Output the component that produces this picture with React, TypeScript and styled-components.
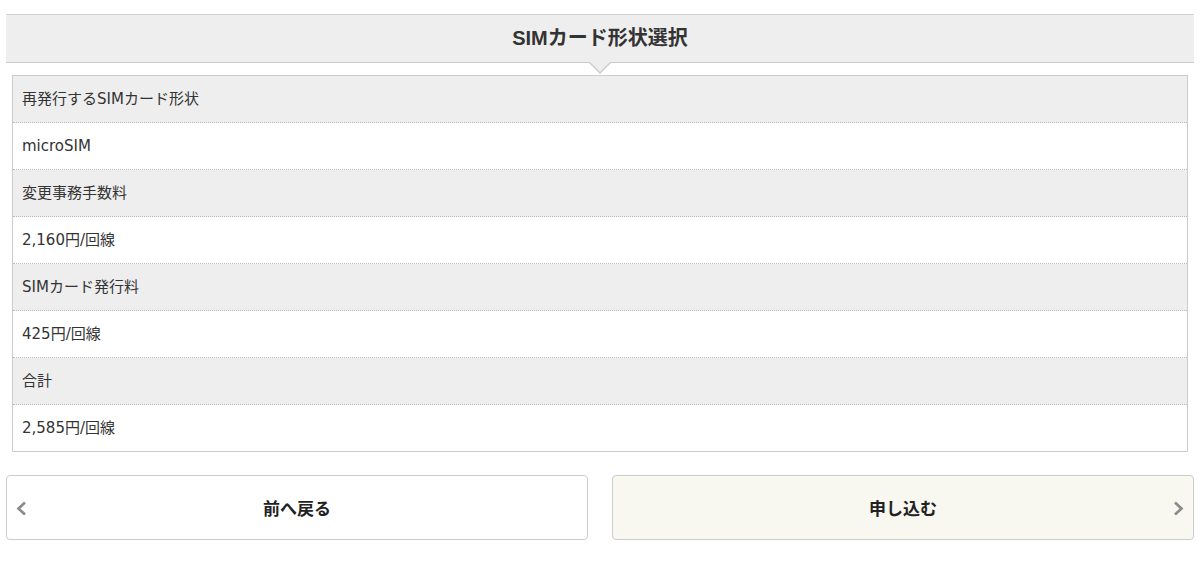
import React from 'react';
import styled, { createGlobalStyle } from 'styled-components';

const GlobalStyle = createGlobalStyle`
    body {
        margin: 0;
        background: #fff;
        font-family: "Liberation Sans", "Noto Sans CJK JP", sans-serif;
        color: #333;
    }
`;

const Page = styled.div`
    padding: 14px 6px 0;
`;

const Heading = styled.h2`
    position: relative;
    margin: 0;
    height: 47px;
    line-height: 47px;
    background: #eeeeee;
    border-top: 1px solid #d2d2d2;
    border-bottom: 1px solid #cccccc;
    text-align: center;
    font-size: 20px;
    font-weight: bold;
    color: #333;

    &::before,
    &::after {
        content: '';
        position: absolute;
        left: 50%;
        width: 0;
        height: 0;
        border-style: solid;
    }
    &::before {
        top: 48px;
        margin-left: -11px;
        border-width: 11px 11px 0 11px;
        border-color: #cccccc transparent transparent transparent;
    }
    &::after {
        top: 47px;
        margin-left: -10px;
        border-width: 10px 10px 0 10px;
        border-color: #eeeeee transparent transparent transparent;
    }
`;

const Table = styled.dl`
    margin: 12px 6px 0;
    border: 1px solid #cccccc;
`;

const Cell = styled.div<{ $head?: boolean }>`
    height: 46px;
    line-height: 46px;
    padding: 0 9px;
    font-family: "DejaVu Sans", "Noto Sans CJK JP", sans-serif;
    font-size: 15px;
    color: #333;
    background: ${(p) => (p.$head ? '#eeeeee' : '#ffffff')};
    border-bottom: 1px dotted #bbbbbb;

    &:last-child {
        border-bottom: none;
    }
`;

const Buttons = styled.div`
    display: grid;
    grid-template-columns: 1fr 1fr;
    gap: 24px;
    margin-top: 23px;
`;

const Button = styled.a<{ $primary?: boolean }>`
    position: relative;
    display: flex;
    align-items: center;
    justify-content: center;
    height: 63px;
    border: 1px solid #cccccc;
    border-radius: 4px;
    background: ${(p) => (p.$primary ? '#f8f7f0' : '#ffffff')};
    font-size: 17px;
    font-weight: bold;
    color: #222;
    text-decoration: none;
    cursor: pointer;
`;

const Arrow = styled.svg<{ $side: 'left' | 'right' }>`
    position: absolute;
    top: 50%;
    margin-top: -7px;
    ${(p) => (p.$side === 'left' ? 'left: 8px;' : 'right: 8px;')}
`;

const rows: [string, string][] = [
    ['再発行するSIMカード形状', 'microSIM'],
    ['変更事務手数料', '2,160円/回線'],
    ['SIMカード発行料', '425円/回線'],
    ['合計', '2,585円/回線'],
];

const App = () => (
    <Page>
        <GlobalStyle />
        <Heading>SIMカード形状選択</Heading>
        <Table>
            {rows.map(([label, value]) => (
                <React.Fragment key={label}>
                    <Cell as="dt" $head>{label}</Cell>
                    <Cell as="dd" style={{ margin: 0 }}>{value}</Cell>
                </React.Fragment>
            ))}
        </Table>
        <Buttons>
            <Button>
                <Arrow $side="left" width="12" height="15" viewBox="0 0 12 15">
                    <polyline points="10,1.5 3.5,7.5 10,13.5" fill="none" stroke="#8a8a8a" strokeWidth="2.6" />
                </Arrow>
                前へ戻る
            </Button>
            <Button $primary>
                申し込む
                <Arrow $side="right" width="12" height="15" viewBox="0 0 12 15">
                    <polyline points="2,1.5 8.5,7.5 2,13.5" fill="none" stroke="#8a8a8a" strokeWidth="2.6" />
                </Arrow>
            </Button>
        </Buttons>
    </Page>
);

export default App;
